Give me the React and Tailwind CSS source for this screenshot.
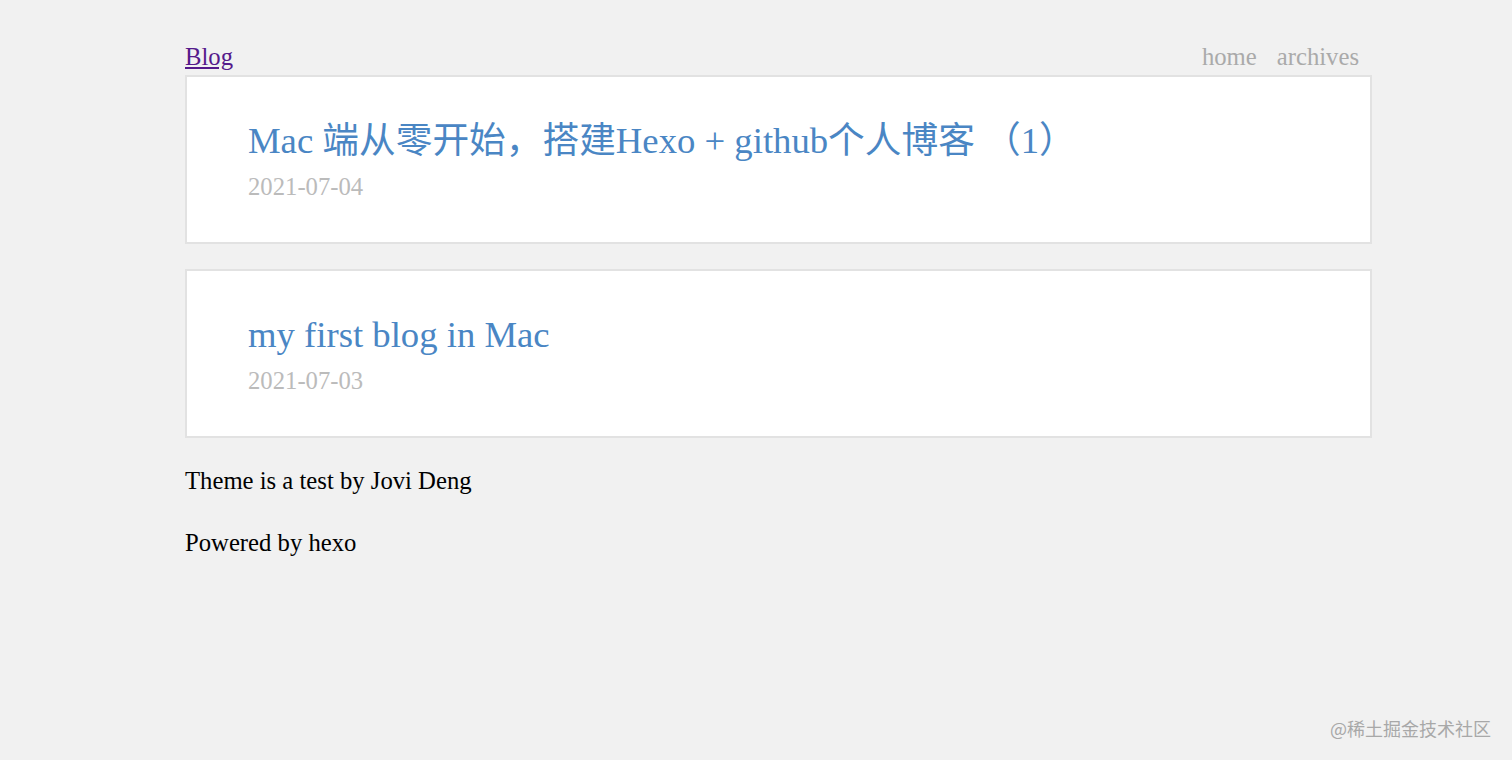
import React from "react";

const posts = [
  { title: "Mac 端从零开始，搭建Hexo + github个人博客 （1）", date: "2021-07-04" },
  { title: "my first blog in Mac", date: "2021-07-03" },
];

export default function App() {
  return (
    <div className="relative min-h-[760px] bg-[#f1f1f1] font-['Liberation_Serif','Noto_Sans_CJK_SC',serif] text-black">
      <div className="ml-[185px] w-[1187px] pt-[43px]">
        {/* header */}
        <div className="mb-[4px] flex items-end justify-between">
          <a href="#" className="text-[24.7px] leading-[28px] text-[#551a8b] underline">
            Blog
          </a>
          <div className="flex gap-[20px] pr-[13px] text-[24.7px] leading-[28px] text-[#aaaaaa]">
            <a href="#">home</a>
            <a href="#">archives</a>
          </div>
        </div>

        {/* posts */}
        <div className="flex flex-col gap-[25px]">
          {posts.map((post) => (
            <div
              key={post.date}
              className="border-2 border-[#e2e2e2] bg-white pb-[41px] pl-[61px] pt-[44px]"
            >
              <a href="#" className="block text-[36.7px] leading-[40px] text-[#4a86c4]">
                {post.title}
              </a>
              <div className="mt-[12px] text-[24.7px] leading-[28px] text-[#bbbbbb]">{post.date}</div>
            </div>
          ))}
        </div>

        {/* footer */}
        <p className="mt-[29px] text-[24.7px] leading-[28px]">Theme is a test by Jovi Deng</p>
        <p className="mt-[34px] text-[24.7px] leading-[28px]">Powered by hexo</p>
      </div>

      <div className="absolute bottom-[20px] right-[21px] font-['Noto_Sans_CJK_SC',sans-serif] text-[18px] leading-[24px] text-[#a8a8a8]">
        @稀土掘金技术社区
      </div>
    </div>
  );
}
